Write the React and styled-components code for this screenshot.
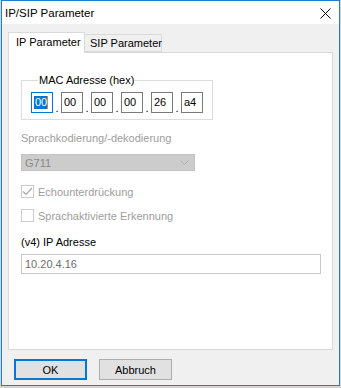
import React from 'react'
import styled, { createGlobalStyle } from 'styled-components'

const GlobalStyle = createGlobalStyle`
	html, body {
		margin: 0;
		padding: 0;
		background: #d4d4d4;
	}
	body {
		font-family: "Liberation Sans", Arial, sans-serif;
		font-size: 11px;
		color: #000;
	}
`

const Window = styled.div`
	box-sizing: border-box;
	width: 339px;
	height: 386px;
	margin-left: 1px;
	border: 1px solid #1c7ed4;
	background: #f0f0f0;
	display: flex;
	flex-direction: column;
`

const TitleBar = styled.div`
	height: 23px;
	background: #fff;
	display: flex;
	align-items: center;
	justify-content: space-between;
	padding: 0 8px 0 3px;
	font-size: 11.5px;
	flex-shrink: 0;
`

const Body = styled.div`
	padding: 8px 6px 0 6px;
	display: flex;
	flex-direction: column;
`

const TabStrip = styled.div`
	display: flex;
	align-items: flex-end;
	height: 20px;
	position: relative;
	z-index: 1;
`

const Tab = styled.div`
	box-sizing: border-box;
	white-space: nowrap;
	border: 1px solid #d9d9d9;
	border-bottom: ${p => (p.$active ? 'none' : '1px solid #d9d9d9')};
	background: ${p => (p.$active ? '#fff' : '#f0f0f0')};
	height: ${p => (p.$active ? '21px' : '18px')};
	margin-bottom: ${p => (p.$active ? '-1px' : '0')};
	margin-left: ${p => (p.$active ? '0' : '-1px')};
	width: ${p => p.$w}px;
	padding: ${p => (p.$active ? '3px 0 0 7px' : '2px 0 0 5px')};
	position: relative;
	z-index: ${p => (p.$active ? 2 : 0)};
`

const Panel = styled.div`
	box-sizing: border-box;
	height: 298px;
	background: #fff;
	border: 1px solid #d9d9d9;
	padding: 21px 11px 0 12px;
	display: flex;
	flex-direction: column;
`

const GroupBox = styled.fieldset`
	box-sizing: border-box;
	width: 192px;
	margin: 0;
	padding: 5px 0 0 9px;
	height: 46px;
	border: 1px solid #dcdcdc;
	display: flex;
	align-items: flex-start;
`

const Legend = styled.legend`
	padding: 0 1px;
	margin-left: 7px;
	line-height: 13px;
`

const MacRow = styled.div`
	display: flex;
	align-items: flex-end;
`

const MacField = styled.div`
	box-sizing: border-box;
	width: 22px;
	height: 21px;
	border: 1px solid ${p => (p.$focus ? '#0078d7' : '#7a7a7a')};
	background: #fff;
	padding: 3px 0 0 2px;
	line-height: 13px;
	display: flex;
	align-items: flex-start;
`

const Selection = styled.span`
	background: #0078d7;
	color: #fff;
	border-right: 1px solid #e8803a;
	padding: 0 0 0 1px;
`

const Dot = styled.span`
	width: 8px;
	text-align: center;
	line-height: 10px;
`

const Label = styled.div`
	color: ${p => (p.$disabled ? '#9d9d9d' : '#000')};
	line-height: 13px;
	margin-top: ${p => p.$mt || 0}px;
`

const Select = styled.div`
	box-sizing: border-box;
	width: 174px;
	height: 17px;
	margin-top: 9px;
	background: #cccccc;
	border: 1px solid #c4c4c4;
	color: #8a8a8a;
	display: flex;
	align-items: center;
	justify-content: space-between;
	padding: 0 5px 0 3px;
`

const CheckRow = styled.div`
	display: flex;
	align-items: center;
	gap: 4px;
	color: #9d9d9d;
	margin-top: ${p => p.$mt}px;
	height: 13px;
`

const Box = styled.div`
	box-sizing: border-box;
	width: 13px;
	height: 13px;
	border: 1px solid #cccccc;
	background: #fff;
	display: flex;
	align-items: center;
	justify-content: center;
`

const TextInput = styled.div`
	box-sizing: border-box;
	width: 300px;
	height: 20px;
	margin-top: 5px;
	border: 1px solid #c8c8c8;
	background: #fff;
	color: #6d6d6d;
	padding: 0 3px;
	display: flex;
	align-items: center;
`

const ButtonRow = styled.div`
	display: flex;
	gap: 12px;
	margin: 9px 0 0 6px;
`

const Button = styled.div`
	box-sizing: border-box;
	width: 73px;
	height: 21px;
	background: #e1e1e1;
	border: ${p => (p.$default ? '2px solid #0078d7' : '1px solid #adadad')};
	display: flex;
	align-items: center;
	justify-content: center;
`

const CloseIcon = () => (
	<svg width="11" height="11" viewBox="0 0 11 11" style={{ marginTop: 1 }}>
		<path d="M0.5 0.5 L10.5 10.5 M10.5 0.5 L0.5 10.5" stroke="#000" strokeWidth="1" fill="none" />
	</svg>
)

const Chevron = () => (
	<svg width="9" height="5" viewBox="0 0 9 5">
		<path d="M0.5 0.5 L4.5 4.5 L8.5 0.5" stroke="#b0b0b0" strokeWidth="1" fill="none" />
	</svg>
)

const Check = () => (
	<svg width="11" height="9" viewBox="0 0 11 9">
		<path d="M1 4.5 L4 7.5 L10 1" stroke="#a8a8a8" strokeWidth="1.2" fill="none" />
	</svg>
)

const macParts = ['00', '00', '00', '00', '26', 'a4']

export default function App() {
	return (
		<>
			<GlobalStyle />
			<Window>
				<TitleBar>
					<span>IP/SIP Parameter</span>
					<CloseIcon />
				</TitleBar>
				<Body>
					<TabStrip>
						<Tab $active $w={77}>IP Parameter</Tab>
						<Tab $w={78}>SIP Parameter</Tab>
					</TabStrip>
					<Panel>
						<GroupBox>
							<Legend>MAC Adresse (hex)</Legend>
							<MacRow>
								{macParts.map((p, i) => (
									<React.Fragment key={i}>
										{i > 0 && <Dot>.</Dot>}
										<MacField $focus={i === 0}>
											{i === 0 ? <Selection>{p}</Selection> : p}
										</MacField>
									</React.Fragment>
								))}
							</MacRow>
						</GroupBox>
						<Label $disabled $mt={12}>Sprachkodierung/-dekodierung</Label>
						<Select>
							<span>G711</span>
							<Chevron />
						</Select>
						<CheckRow $mt={14}>
							<Box><Check /></Box>
							<span>Echounterdrückung</span>
						</CheckRow>
						<CheckRow $mt={11}>
							<Box />
							<span>Sprachaktivierte Erkennung</span>
						</CheckRow>
						<Label $mt={14}>(v4) IP Adresse</Label>
						<TextInput>10.20.4.16</TextInput>
					</Panel>
					<ButtonRow>
						<Button $default>OK</Button>
						<Button>Abbruch</Button>
					</ButtonRow>
				</Body>
			</Window>
		</>
	)
}
